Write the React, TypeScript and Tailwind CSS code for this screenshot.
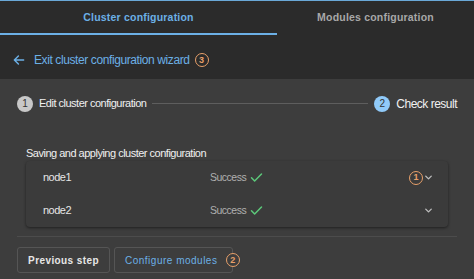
import React from "react";

const Badge = ({ n }: { n: number }) => (
  <span className="inline-flex h-[14px] w-[14px] items-center justify-center rounded-full border-[1.5px] border-[#e8a06a] text-[9px] font-bold leading-none text-[#e8a06a]">
    {n}
  </span>
);

const Check = () => (
  <svg width="15" height="15" viewBox="0 0 24 24" fill="none" stroke="#5cc87a" strokeWidth="2.4" strokeLinecap="round" strokeLinejoin="round">
    <path d="M4 12.5l5 5L20 6.5" />
  </svg>
);

const Chevron = () => (
  <svg width="11" height="11" viewBox="0 0 24 24" fill="none" stroke="#bdbdbd" strokeWidth="3" strokeLinecap="round" strokeLinejoin="round">
    <path d="M6 9l6 6 6-6" />
  </svg>
);

const NodeRow = ({ name, badge }: { name: string; badge?: boolean }) => (
  <div className="flex h-[33px] items-center pl-[17px] pr-[14px]">
    <span className="w-[167px] text-[11px] font-medium tracking-[-0.5px] text-[#e6e6e6]">{name}</span>
    <span className="flex items-center gap-[3px] text-[10.5px] tracking-[-0.5px] text-[#b0b0b0]">
      Success <Check />
    </span>
    <span className="ml-auto flex items-center">
      {badge && <Badge n={1} />}
      <Chevron />
    </span>
  </div>
);

export default function App() {
  return (
    <div className="flex h-[279px] w-[474px] flex-col overflow-hidden bg-[#3d3d3d] font-['Liberation_Sans',Arial,sans-serif]">
      <div className="border-t border-[#6aa8d8] bg-[#2b2b2b]">
        <div className="flex h-[34px]">
          <div className="flex w-[277px] items-center justify-center border-b-2 border-[#6cb0e6] pt-[2px] text-[10.5px] font-bold tracking-[0.2px] text-[#6cb0e6]">
            Cluster configuration
          </div>
          <div className="flex flex-1 items-center justify-center pb-[1px] text-[10.5px] font-bold tracking-[0.2px] text-[#a8a8a8]">
            Modules configuration
          </div>
        </div>
        <div className="flex h-[44px] items-center gap-[5px] pl-[12px] pt-[6px]">
          <svg width="14" height="14" viewBox="0 0 24 24" fill="none" stroke="#6cb0e6" strokeWidth="2.4" strokeLinecap="round" strokeLinejoin="round">
            <path d="M20 12H4M11 5l-7 7 7 7" />
          </svg>
          <span className="ml-[3px] text-[12px] tracking-[-0.4px] text-[#6cb0e6]">Exit cluster configuration wizard</span>
          <Badge n={3} />
        </div>
      </div>
      <div className="flex flex-1 flex-col px-[17px]">
        <div className="mt-[16px] flex h-[17px] items-center">
          <span className="flex h-[16px] w-[16px] items-center justify-center rounded-full bg-[#c8c8c8] text-[10px] text-[#333]">1</span>
          <span className="ml-[6px] text-[11px] tracking-[-0.5px] text-[#f0f0f0]">Edit cluster configuration</span>
          <div className="mx-[6px] h-px flex-1 bg-[#5e5e5e]" />
          <span className="flex h-[16px] w-[16px] items-center justify-center rounded-full bg-[#90caf9] text-[10px] text-[#333]">2</span>
          <span className="ml-[6px] text-[12px] tracking-[-0.5px] text-[#f0f0f0]">Check result</span>
        </div>
        <div className="mt-[34px] px-[9px]">
          <div className="text-[11px] leading-[14px] tracking-[-0.5px] text-[#f0f0f0]">Saving and applying cluster configuration</div>
          <div className="mt-px rounded-[4px] bg-[#3b3b3b] shadow-[0_1px_3px_rgba(0,0,0,0.5)]">
            <NodeRow name="node1" badge />
            <NodeRow name="node2" />
          </div>
        </div>
        <div className="mt-[9px] h-px bg-[#4c4c4c]" />
        <div className="mt-[10px] flex items-center gap-[4px]">
          <button className="h-[26px] w-[93px] rounded-[3px] border border-[#555] text-[10px] font-bold tracking-[0.4px] text-[#e6e6e6]">
            Previous step
          </button>
          <button className="relative h-[26px] w-[119px] rounded-[3px] border border-[#555] pl-[10px] text-left text-[10px] font-medium tracking-[0.5px] text-[#6cb0e6]">
            Configure modules
            <span className="absolute -right-[8px] top-[5px] flex bg-[#3d3d3d]"><Badge n={2} /></span>
          </button>
        </div>
      </div>
    </div>
  );
}
